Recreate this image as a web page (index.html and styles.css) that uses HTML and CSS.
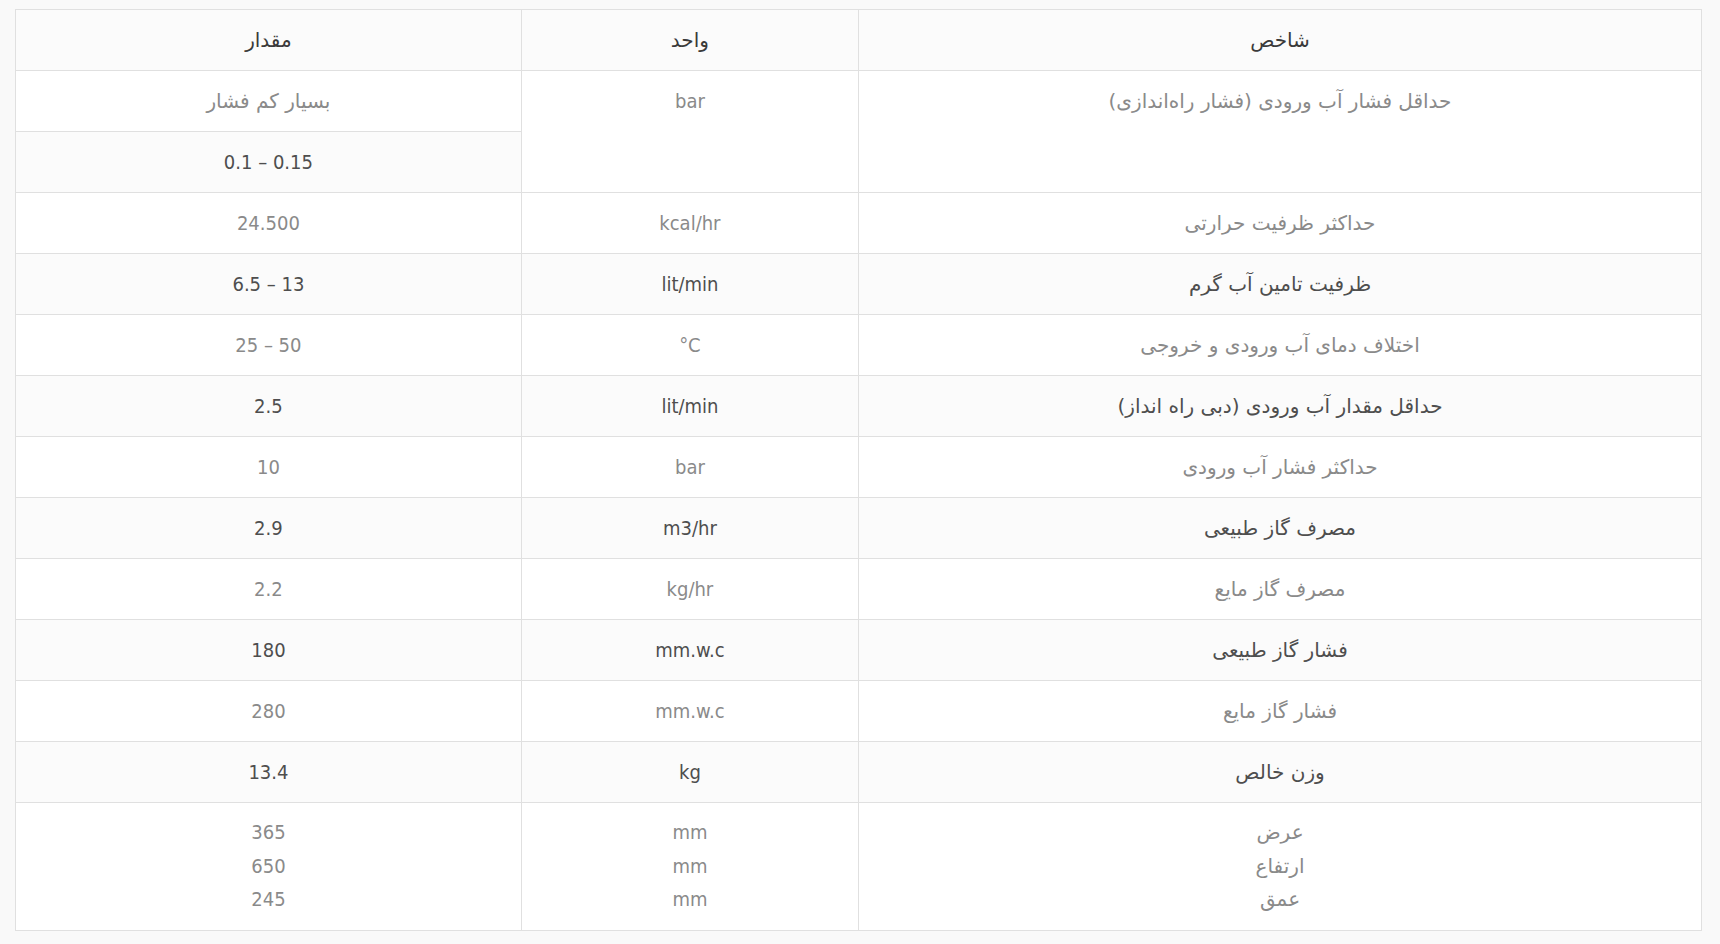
FILE: index.html
```html
<!DOCTYPE html>
<html lang="fa" dir="rtl">
<head>
<meta charset="utf-8">
<title>مشخصات فنی</title>
<link rel="stylesheet" href="styles.css">
</head>
<body>
<div class="wrap">
<table class="spec">
<colgroup>
<col class="c-name">
<col class="c-unit">
<col class="c-val">
</colgroup>
<thead>
<tr><th class="fa">شاخص</th><th class="fa">واحد</th><th class="fa">مقدار</th></tr>
</thead>
<tbody>
<tr><td class="fa" rowspan="2">حداقل فشار آب ورودی (فشار راه‌اندازی)</td><td rowspan="2">bar</td><td class="fa">بسیار کم فشار</td></tr>
<tr><td class="ltr">0.1 – 0.15</td></tr>
<tr><td class="fa">حداکثر ظرفیت حرارتی</td><td>kcal/hr</td><td>24.500</td></tr>
<tr><td class="fa">ظرفیت تامین آب گرم</td><td>lit/min</td><td class="ltr">6.5 – 13</td></tr>
<tr><td class="fa">اختلاف دمای آب ورودی و خروجی</td><td class="ltr">°C</td><td class="ltr">25 – 50</td></tr>
<tr><td class="fa">حداقل مقدار آب ورودی (دبی راه انداز)</td><td>lit/min</td><td>2.5</td></tr>
<tr><td class="fa">حداکثر فشار آب ورودی</td><td>bar</td><td>10</td></tr>
<tr><td class="fa">مصرف گاز طبیعی</td><td>m3/hr</td><td>2.9</td></tr>
<tr><td class="fa">مصرف گاز مایع</td><td>kg/hr</td><td>2.2</td></tr>
<tr><td class="fa">فشار گاز طبیعی</td><td>mm.w.c</td><td>180</td></tr>
<tr><td class="fa">فشار گاز مایع</td><td>mm.w.c</td><td>280</td></tr>
<tr><td class="fa">وزن خالص</td><td>kg</td><td>13.4</td></tr>
<tr class="multi"><td class="fa">عرض<br>ارتفاع<br>عمق</td><td>mm<br>mm<br>mm</td><td>365<br>650<br>245</td></tr>
</tbody>
</table>
</div>
</body>
</html>
```

FILE: styles.css
```css
html, body {
  margin: 0;
  padding: 0;
  background: #f9f9f9;
}

.wrap {
  padding: 9px 18px 13px 15px;
}

.spec {
  width: 100%;
  border-collapse: collapse;
  table-layout: fixed;
  direction: rtl;
  font-family: "DejaVu Sans Condensed", "DejaVu Sans", sans-serif;
  font-stretch: condensed;
  font-size: 20px;
  background: #ffffff;
  border: 1px solid #e0e0e0;
}

.c-name { width: 50%; }
.c-unit { width: 20%; }
.c-val { width: 30%; }

.spec th,
.spec td {
  border: 1px solid #e0e0e0;
  padding: 13px 10px;
  line-height: 34px;
  text-align: center;
  vertical-align: top;
  font-weight: normal;
}

.spec th {
  background: #fbfbfb;
  color: #3a3a3a;
}

.spec tbody tr:nth-child(odd) td {
  background: #ffffff;
  color: #8a8a8a;
}

.spec tbody tr:nth-child(even) td {
  background: #fbfbfb;
  color: #4e4e4e;
}

.spec .fa {
  font-family: "DejaVu Sans", sans-serif;
  font-stretch: normal;
}

.spec .multi td {
  line-height: 33.7px;
}

.ltr {
  direction: ltr;
  unicode-bidi: isolate;
}
```
